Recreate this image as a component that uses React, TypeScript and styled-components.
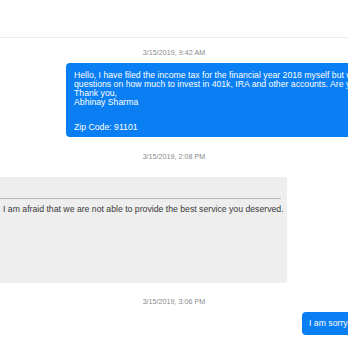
import React from "react";
import styled, { createGlobalStyle } from "styled-components";

const Global = createGlobalStyle`
  html, body { margin: 0; padding: 0; background: #ffffff; overflow: hidden; }
  body { font-family: "Liberation Sans", Arial, sans-serif; }
`;

const Page = styled.div`
  width: 348px;
  height: 348px;
  overflow: hidden;
  display: flex;
  flex-direction: column;
`;

const Header = styled.div`
  height: 37px;
  flex: none;
  border-bottom: 1px solid #ececec;
`;

const Thread = styled.div`
  display: flex;
  flex-direction: column;
`;

const Stamp = styled.div<{ $top: number; $bottom: number }>`
  margin-top: ${(p) => p.$top}px;
  margin-bottom: ${(p) => p.$bottom}px;
  text-align: center;
  font-size: 7.2px;
  line-height: 10px;
  color: #8a8a8a;
  white-space: nowrap;
`;

const OutBubble = styled.div<{ $left: number }>`
  align-self: flex-start;
  margin-left: ${(p) => p.$left}px;
  width: 420px;
  flex: none;
  background: #0a7ef3;
  color: #ffffff;
  border-radius: 4px;
  padding: 8px 8px 5px;
  font-size: 8.7px;
  line-height: 9px;
  white-space: nowrap;
`;

const ShortBubble = styled(OutBubble)`
  width: auto;
  padding: 7px 20px 7px 7px;
`;

const Line = styled.div<{ $gap?: number }>`
  margin-top: ${(p) => p.$gap ?? 0}px;
`;

const InBubble = styled.div`
  margin-left: -3px;
  width: 290px;
  min-height: 106px;
  box-sizing: border-box;
  background: #eeeeee;
  border-radius: 3px;
  padding: 0 6px 0 3px;
  display: flex;
  flex-direction: column;
`;

const InHead = styled.div`
  height: 21px;
  border-bottom: 1px solid #b9b9b9;
`;

const InText = styled.div`
  margin-top: 5px;
  padding-left: 3px;
  font-size: 8.7px;
  line-height: 10px;
  color: #3a3a3a;
  white-space: nowrap;
`;

export default function App() {
  return (
    <>
      <Global />
      <Page>
        <Header />
        <Thread>
          <Stamp $top={10} $bottom={5}>3/15/2019, 9:42 AM</Stamp>
          <OutBubble $left={66}>
            <Line>Hello, I have filed the income tax for the financial year 2018 myself but we have some</Line>
            <Line>questions on how much to invest in 401k, IRA and other accounts. Are you able to help?</Line>
            <Line>Thank you,</Line>
            <Line>Abhinay Sharma</Line>
            <Line $gap={16}>Zip Code: 91101</Line>
          </OutBubble>
          <Stamp $top={15} $bottom={15}>3/15/2019, 2:08 PM</Stamp>
          <InBubble>
            <InHead />
            <InText>I am afraid that we are not able to provide the best service you deserved.</InText>
          </InBubble>
          <Stamp $top={14} $bottom={5}>3/15/2019, 3:06 PM</Stamp>
          <ShortBubble $left={302}>I am sorry</ShortBubble>
        </Thread>
      </Page>
    </>
  );
}
